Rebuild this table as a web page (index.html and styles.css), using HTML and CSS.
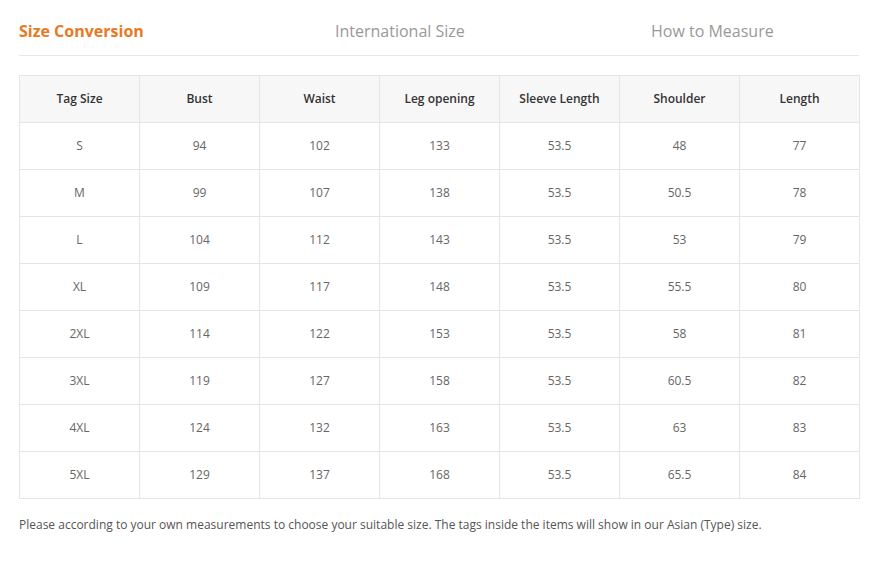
FILE: index.html
```html
<!DOCTYPE html>
<html lang="en">
<head>
<meta charset="utf-8">
<title>Size Chart</title>
<link rel="stylesheet" href="styles.css">
</head>
<body>
<div class="wrap">
  <div class="tabs">
    <div class="tab active">Size Conversion</div>
    <div class="tab">International Size</div>
    <div class="tab">How to Measure</div>
  </div>
  <table class="chart">
    <colgroup>
      <col class="c"><col class="c"><col class="c"><col class="c"><col class="c"><col class="c"><col class="c">
    </colgroup>
    <thead>
      <tr><th>Tag Size</th><th>Bust</th><th>Waist</th><th>Leg opening</th><th>Sleeve Length</th><th>Shoulder</th><th>Length</th></tr>
    </thead>
    <tbody>
      <tr><td>S</td><td>94</td><td>102</td><td>133</td><td>53.5</td><td>48</td><td>77</td></tr>
      <tr><td>M</td><td>99</td><td>107</td><td>138</td><td>53.5</td><td>50.5</td><td>78</td></tr>
      <tr><td>L</td><td>104</td><td>112</td><td>143</td><td>53.5</td><td>53</td><td>79</td></tr>
      <tr><td>XL</td><td>109</td><td>117</td><td>148</td><td>53.5</td><td>55.5</td><td>80</td></tr>
      <tr><td>2XL</td><td>114</td><td>122</td><td>153</td><td>53.5</td><td>58</td><td>81</td></tr>
      <tr><td>3XL</td><td>119</td><td>127</td><td>158</td><td>53.5</td><td>60.5</td><td>82</td></tr>
      <tr><td>4XL</td><td>124</td><td>132</td><td>163</td><td>53.5</td><td>63</td><td>83</td></tr>
      <tr><td>5XL</td><td>129</td><td>137</td><td>168</td><td>53.5</td><td>65.5</td><td>84</td></tr>
    </tbody>
  </table>
  <p class="note">Please according to your own measurements to choose your suitable size. The tags inside the items will show in our Asian (Type) size.</p>
</div>
</body>
</html>
```
FILE: styles.css
```css
html, body {
  margin: 0;
  padding: 0;
  background: #fff;
}
body {
  font-family: "Open Sans", "Liberation Sans", sans-serif;
  color: #666;
}
.wrap {
  width: 840px;
  padding: 20px 19px 0 19px;
}
.tabs {
  display: flex;
  height: 35px;
  border-bottom: 1px solid #e8e8e8;
}
.tab {
  flex: 0 0 316px;
  white-space: nowrap;
  font-size: 16px;
  line-height: 22px;
  color: #999;
}
.tab:last-child {
  flex: 0 0 auto;
}
.tab.active {
  color: #e8791f;
  font-weight: 700;
}
.chart {
  margin-top: 19px;
  width: 840px;
  border-collapse: collapse;
  table-layout: fixed;
}
.chart .c {
  width: 120px;
}
.chart th, .chart td {
  border: 1px solid #e5e5e5;
  height: 47px;
  padding: 0 0 2px 0;
  text-align: center;
  font-size: 12px;
  box-sizing: border-box;
}
.chart th {
  background: #f7f7f7;
  color: #333;
  font-weight: 600;
}
.chart td {
  color: #666;
  font-weight: 400;
}
.note {
  margin: 17px 0 0 0;
  font-size: 12px;
  line-height: 18px;
  color: #555;
}
```
